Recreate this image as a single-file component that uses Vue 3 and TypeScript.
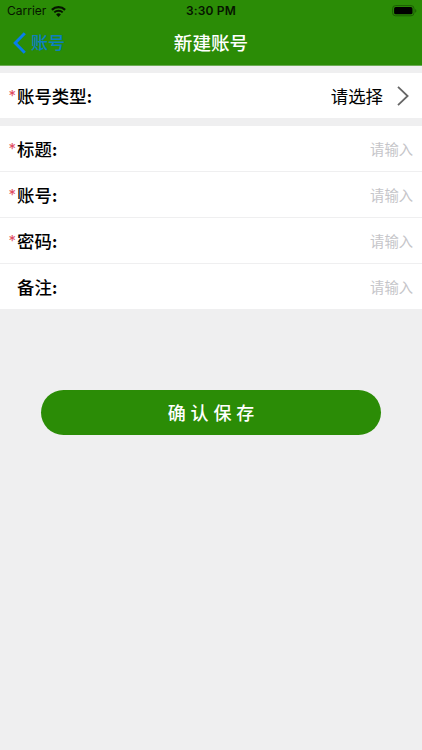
<script setup lang="ts">
interface Field {
  label: string
  required: boolean
}

const fields: Field[] = [
  { label: '标题', required: true },
  { label: '账号', required: true },
  { label: '密码', required: true },
  { label: '备注', required: false },
]
</script>

<template>
  <div class="screen">
    <header class="header">
      <div class="status">
        <div class="carrier">
          <span>Carrier</span>
          <svg class="wifi" width="15" height="11" viewBox="0 0 15 11" fill="none" stroke="#061500">
            <path d="M0.9 3.9a9.4 9.4 0 0 1 13.2 0" stroke-width="2.2" />
            <path d="M3.3 6.4a6 6 0 0 1 8.4 0" stroke-width="2" />
            <path d="M7.5 10.9L5.1 8.5a3.5 3.5 0 0 1 4.8 0z" fill="#061500" stroke="none" />
          </svg>
        </div>
        <div class="time">3:30 PM</div>
        <div class="power">
          <svg width="25" height="12" viewBox="0 0 25 12">
            <rect x="0.6" y="0.6" width="21.4" height="10.2" rx="3" fill="none" stroke="#1c5d04" stroke-width="1" />
            <rect x="2.1" y="2.1" width="18.4" height="7.2" rx="1.6" fill="#000" />
            <path d="M23.2 3.9c1.5.6 1.5 3.2 0 3.8z" fill="#1c5d04" />
          </svg>
        </div>
      </div>
      <nav class="nav">
        <button class="back">
          <svg width="13" height="22" viewBox="0 0 13 22" fill="none" stroke="#087eea" stroke-width="3">
            <path d="M11.8 1.2L2.2 11l9.6 9.8" />
          </svg>
          <span>账号</span>
        </button>
        <h1 class="title">新建账号</h1>
        <span></span>
      </nav>
    </header>

    <section class="group">
      <div class="row">
        <span class="star">*</span>
        <span class="label">账号类型<b>:</b></span>
        <span class="choice">请选择</span>
        <svg class="arrow" width="12" height="20" viewBox="0 0 12 20" fill="none" stroke="#666" stroke-width="1.8">
          <path d="M1 0.9L10.6 10L1 19.1" />
        </svg>
      </div>
    </section>

    <section class="group fields">
      <div v-for="field in fields" :key="field.label" class="row">
        <span class="star">{{ field.required ? '*' : '' }}</span>
        <span class="label">{{ field.label }}<b>:</b></span>
        <span class="placeholder">请输入</span>
      </div>
    </section>

    <button class="save">确认保存</button>
  </div>
</template>

<style>
body {
  background: #efeff0;
}
</style>

<style scoped>
.screen {
  display: flex;
  flex-direction: column;
  min-height: 750px;
  background: #efeff0;
  color: #000;
  font-family: Inter, "Noto Sans CJK SC", sans-serif;
}
button {
  border: 0;
  padding: 0;
  font-family: inherit;
}
.header {
  box-sizing: border-box;
  height: 66px;
  border-bottom: 1px solid #6dab55;
  background: #2b8c06;
}
.status {
  display: grid;
  grid-template-columns: 1fr auto 1fr;
  align-items: center;
  height: 22px;
  padding: 0 5px 0 7px;
  color: #061500;
  line-height: 22px;
}
.carrier {
  display: flex;
  align-items: center;
  gap: 5px;
  font-size: 12px;
}
.time {
  padding-right: 2px;
  font-size: 12px;
  font-weight: 600;
  letter-spacing: 0.15px;
}
.power {
  display: flex;
  justify-content: flex-end;
}
.nav {
  display: grid;
  grid-template-columns: 1fr auto 1fr;
  align-items: center;
  height: 42px;
}
.back {
  display: flex;
  align-items: center;
  gap: 5px;
  padding-left: 13px;
  background: none;
  color: #0c7fc0;
  font-size: 17px;
  font-weight: 500;
  line-height: 22px;
}
.title {
  margin: 0;
  color: #fff;
  font-size: 18.6px;
  font-weight: 500;
  line-height: 26px;
}
.group {
  margin-top: 7px;
  background: #fff;
}
.row {
  display: flex;
  align-items: center;
  box-sizing: border-box;
  height: 46px;
  padding: 0 9px 0 8.5px;
}
.row + .row {
  border-top: 1px solid #efeff0;
}
.row:first-child {
  height: 45px;
}
.row:only-child {
  padding-right: 13px;
}
.fields {
  margin-top: 8px;
}
.star {
  width: 8.5px;
  color: #e04a60;
  font-size: 15px;
}
.label {
  flex: 1;
  font-size: 17.4px;
  font-weight: 500;
}
.label b {
  font-weight: 700;
}
.choice {
  font-size: 17.4px;
}
.arrow {
  margin-left: 14px;
}
.placeholder {
  color: #c5c5c9;
  font-size: 14.3px;
}
.save {
  height: 45px;
  margin: 81px 41px 0;
  padding-bottom: 2px;
  border-radius: 23px;
  background: #2b8c06;
  color: #fff;
  font-size: 18px;
  font-weight: 500;
  letter-spacing: 4.9px;
  text-indent: 4.9px;
}
</style>
